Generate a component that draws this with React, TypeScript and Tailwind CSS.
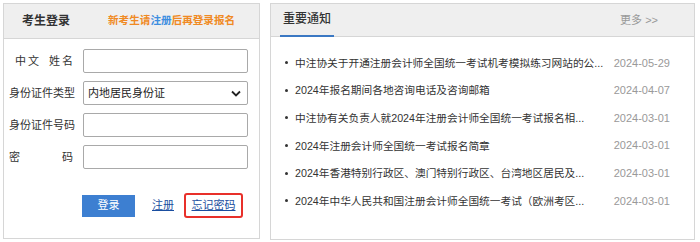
const notices = [
  { title: '中注协关于开通注册会计师全国统一考试机考模拟练习网站的公...', date: '2024-05-29' },
  { title: '2024年报名期间各地咨询电话及咨询邮箱', date: '2024-04-07' },
  { title: '中注协有关负责人就2024年注册会计师全国统一考试报名相...', date: '2024-03-01' },
  { title: '2024年注册会计师全国统一考试报名简章', date: '2024-03-01' },
  { title: '2024年香港特别行政区、澳门特别行政区、台湾地区居民及...', date: '2024-03-01' },
  { title: '2024年中华人民共和国注册会计师全国统一考试（欧洲考区...', date: '2024-03-01' },
]

const font = { fontFamily: '"Liberation Sans", "Noto Sans CJK SC", sans-serif' }

function Field({ label, children }: { label: React.ReactNode; children: React.ReactNode }) {
  return (
    <div className="flex items-center h-[24px]">
      <div className="w-[66px] ml-[5px] text-[11px] text-[#333]">{label}</div>
      <div className="ml-[8px] w-[165px] h-[24px]">{children}</div>
    </div>
  )
}

function LoginPanel() {
  return (
    <div className="w-[257px] h-[236px] border border-[#d6d6d6] bg-white flex flex-col">
      <div className="h-[35px] bg-[#efefef] border-b border-[#d6d6d6] flex items-center">
        <span className="ml-[18px] text-[12px] font-bold text-[#333]">考生登录</span>
        <span className="ml-[38px] text-[10.6px] font-bold text-[#f08a24]">
          新考生请<span className="text-[#3d8ee0]">注册</span>后再登录报名
        </span>
      </div>
      <div className="flex flex-col gap-[8px] mt-[10px]">
        <Field
          label={
            <div className="flex pl-[6px]">
              <span>中</span>
              <span className="ml-[2px]">文</span>
              <span className="ml-[10px]">姓</span>
              <span className="ml-[2px]">名</span>
            </div>
          }
        >
          <input className="w-full h-full border border-[#a9a9a9] rounded-[2px] outline-none" />
        </Field>
        <Field label="身份证件类型">
          <div className="w-full h-full border border-[#a9a9a9] rounded-[2px] flex items-center justify-between pl-[4px] pr-[6px] text-[11px] text-[#222]">
            <span>内地居民身份证</span>
            <svg width="10" height="7" viewBox="0 0 10 7"><path d="M1 1.5 L5 5.5 L9 1.5" fill="none" stroke="#222" strokeWidth="1.8" /></svg>
          </div>
        </Field>
        <Field label="身份证件号码">
          <input className="w-full h-full border border-[#a9a9a9] rounded-[2px] outline-none" />
        </Field>
        <Field label={<div className="flex justify-between pr-[2px]"><span>密</span><span>码</span></div>}>
          <input type="password" className="w-full h-full border border-[#a9a9a9] rounded-[2px] outline-none" />
        </Field>
      </div>
      <div className="flex items-center mt-[24px] ml-[78px]">
        <button className="w-[53px] h-[22px] bg-[#3d7fd1] text-white text-[11px]">登录</button>
        <a className="ml-[17px] text-[11px] text-[#1a4ea0] underline">注册</a>
        <div className="ml-[10px] w-[59px] h-[25px] border-2 border-[#e8302a] rounded-[3px] flex items-center justify-center">
          <a className="text-[11px] text-[#1a4ea0] underline">忘记密码</a>
        </div>
      </div>
    </div>
  )
}

function NoticePanel() {
  return (
    <div className="w-[425px] h-[237px] border border-[#d6d6d6] bg-white flex flex-col">
      <div className="h-[33px] bg-[#efefef] border-b border-[#d6d6d6] flex items-end justify-between">
        <div className="ml-[9px] w-[54px] h-[34px] flex items-center justify-center border-b-2 border-[#3a78c3] -mb-[1px] text-[12px] font-medium text-[#333]">
          重要通知
        </div>
        <span className="self-center mr-[36px] text-[11px] text-[#999]">更多 &gt;&gt;</span>
      </div>
      <ul className="mt-[12px] pl-[14px] pr-[24px]">
        {notices.map((n) => (
          <li key={n.title} className="h-[27.6px] flex items-center text-[11px]">
            <span className="w-[3px] h-[3px] rounded-full bg-[#333] shrink-0" />
            <span className="ml-[7px] w-[310px] whitespace-nowrap text-[10.7px] text-[#333]">{n.title}</span>
            <span className="ml-auto shrink-0 text-[#999]">{n.date}</span>
          </li>
        ))}
      </ul>
    </div>
  )
}

export default function App() {
  return (
    <div className="w-[700px] h-[242px] bg-white flex items-start gap-[10px] pt-[3px] pl-[3px]" style={font}>
      <LoginPanel />
      <NoticePanel />
    </div>
  )
}
